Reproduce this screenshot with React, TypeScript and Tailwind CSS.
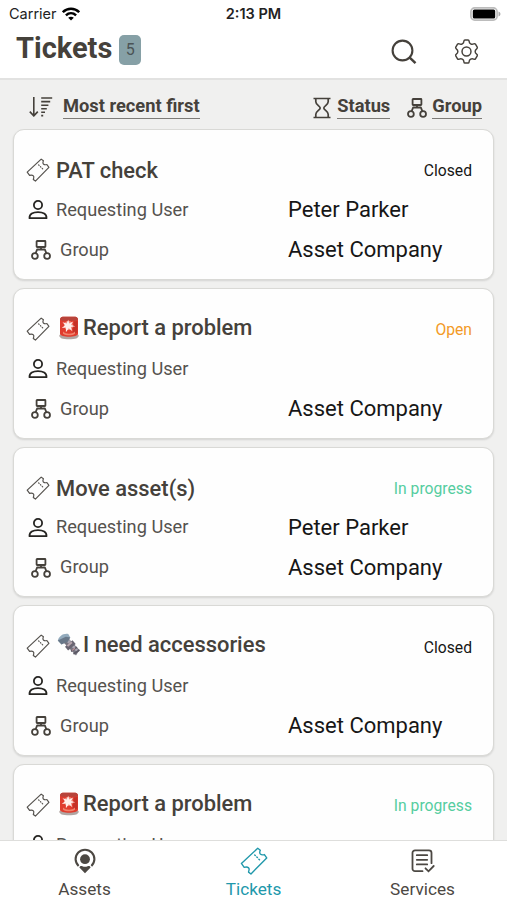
import React from 'react';

interface IconProps {
  className?: string;
}

const TicketIcon: React.FC<IconProps> = ({ className = '' }) => (
  <svg className={className} viewBox="0 0 24 24" fill="none" stroke="currentColor" strokeWidth="1.2" strokeLinejoin="round" strokeLinecap="round">
    <path d="M15.2 1.1 1.2 14.1 3.6 17.4C5 17 6.2 16.8 7.4 17.9 8.5 19 7.4 20.4 7.3 21.5L9.4 23.1 22.9 9.4 20.9 6.5C19.6 6.9 18.5 7 17.4 6 16.4 4.9 17 3.8 17.4 2.8Z" />
    <path d="M12.6 6.8l.5.5M14.4 8.6l.5.5M16.2 10.4l.5.5" />
  </svg>
);

const UserIcon: React.FC<IconProps> = ({ className = '' }) => (
  <svg className={className} viewBox="0 0 20 20" fill="none" stroke="currentColor" strokeWidth="1.8" strokeLinejoin="round">
    <circle cx="10" cy="5" r="4.1" />
    <path d="M1.5 18.1C1.3 14.1 5 12.1 10 12.1s8.700 2 8.500 6Z" />
  </svg>
);

const GroupIcon: React.FC<IconProps> = ({ className = '' }) => (
  <svg className={className} viewBox="0 0 20 20" fill="none" stroke="currentColor" strokeWidth="1.800" strokeLinejoin="round">
    <rect x="5.600" y="1" width="8.800" height="6" rx="0.500" />
    <path d="M10 7v2.500M4.600 13.300l1.500-3.800h7.800l1.500 3.800" />
    <circle cx="3.900" cy="16" r="2.900" />
    <circle cx="16.100" cy="16" r="2.900" />
  </svg>
);

const HourglassIcon: React.FC<IconProps> = ({ className = '' }) => (
  <svg className={className} viewBox="0 0 18 22" fill="none" stroke="currentColor" strokeWidth="1.700">
    <path d="M.5 1.500h17M.5 20.500h17M2.800 1.500v3.200c0 3 4.400 4.400 4.400 6.300s-4.400 3.300-4.400 6.300v3.200M15.200 1.500v3.200c0 3-4.400 4.400-4.400 6.300s4.400 3.300 4.400 6.300v3.200" />
  </svg>
);

const SortIcon: React.FC<IconProps> = ({ className = '' }) => (
  <svg className={className} viewBox="0 0 24 20" fill="none" stroke="currentColor" strokeWidth="1.600">
    <path d="M4.800 0v18.500M.8 14.600l4 4.300 4-4.300" />
    <path d="M12.200 1h11M12.200 4.600h9M12.200 8.200h7.200M12.200 11.800h5.600M12.200 15.200h3.800M12.200 18.600h2" />
  </svg>
);

const SearchIcon: React.FC<IconProps> = ({ className = '' }) => (
  <svg className={className} viewBox="0 0 26 26" fill="none" stroke="currentColor" strokeWidth="2.100">
    <circle cx="11.500" cy="11.500" r="9.900" />
    <path d="M18.200 18.200l6.300 6" strokeWidth="2.500" />
  </svg>
);

const GearIcon: React.FC<IconProps> = ({ className = '' }) => (
  <svg className={className} viewBox="0 0 24 24" fill="none" stroke="currentColor" strokeWidth="1.400" strokeLinejoin="round">
    <path d="M10.500.9h3c.7 0 .9.500 1 1.200.1 1.400.6 2 1.500 2.500s1.700.6 2.900.1c.7-.3 1.300-.3 1.700.3l1.700 2.900c.4.700.1 1.100-.5 1.500-1.100.8-1.500 1.600-1.500 2.600s.4 1.800 1.500 2.600c.6.400.9.800.5 1.500l-1.700 2.900c-.4.600-1 .6-1.700.3-1.200-.5-2-.4-2.900.1s-1.400 1.100-1.500 2.500c-.1.700-.3 1.200-1 1.200h-3c-.7 0-.9-.5-1-1.200-.1-1.400-.6-2-1.500-2.500s-1.700-.6-2.900-.1c-.7.300-1.300.3-1.700-.3l-1.700-2.900c-.4-.7-.1-1.100.5-1.500 1.100-.8 1.500-1.600 1.500-2.600s-.4-1.800-1.500-2.600c-.6-.4-.9-.8-.5-1.500L3.400 5c.4-.6 1-.6 1.700-.3 1.200.5 2 .4 2.900-.1s1.400-1.100 1.500-2.500c.1-.7.300-1.200 1-1.200Z" />
    <circle cx="12" cy="12" r="4.300" />
  </svg>
);

const WifiIcon: React.FC<IconProps> = ({ className = '' }) => (
  <svg className={className} viewBox="0 0 18 14" fill="none" stroke="currentColor" strokeWidth="2.500">
    <path d="M.8 5.200C5.500.6 12.500.6 17.200 5.200M3.900 8.300c3-2.800 7.200-2.800 10.200 0" />
    <path d="M9 13.600 6.200 10.800c1.600-1.400 4-1.400 5.600 0Z" fill="currentColor" stroke="none" />
  </svg>
);

const BatteryIcon: React.FC<IconProps> = ({ className = '' }) => (
  <svg className={className} viewBox="0 0 31 14">
    <rect x=".9" y=".9" width="26.200" height="12.200" rx="3.800" fill="#fff" stroke="#bcbcbc" strokeWidth="1.700" />
    <rect x="2.800" y="2.500" width="22.400" height="9" rx="1.600" fill="#000" />
    <path d="M28.500 4.500c2.600 1 2.600 4 0 5Z" fill="#aaa" />
  </svg>
);

const PinIcon: React.FC<IconProps> = ({ className = '' }) => (
  <svg className={className} viewBox="0 0 22 26" fill="currentColor">
    <path d="M4.600 18A9.400 9.400 0 1 1 17.400 18" fill="none" stroke="currentColor" strokeWidth="2.100" />
    <circle cx="11" cy="11.200" r="4.900" />
    <path d="M5.400 19.400c.6-1.800 2-1.700 3-1.200 1.700.7 3.500.7 5.200 0 1-.5 2.400-.6 3 1.200L11 25.300Z" />
  </svg>
);

const ServicesIcon: React.FC<IconProps> = ({ className = '' }) => (
  <svg className={className} viewBox="0 0 24 24" fill="none" stroke="currentColor" strokeWidth="1.800" strokeLinecap="round">
    <path d="M11.500 22.200H4a2.500 2.500 0 0 1-2.500-2.500V3.800A2.500 2.500 0 0 1 4 1.300h14a2.500 2.500 0 0 1 2.500 2.500v10.400" />
    <path d="M5.800 6.200h10.400M5.800 10.800h10.400M5.800 15.400h10.400M14.500 19.300l3 3 5.200-5.300" />
  </svg>
);

const SirenEmoji = () => (
  <svg className="h-6 w-5" viewBox="0 0 20 24">
    <path d="M1.500 18.500h17c1.200 0 1.500 1 1 2l-1.500 1.800c-4.500 1.300-11.500 1.300-16 0L.5 20.500c-.5-1-.2-2 1-2Z" fill="#b1a5a2" />
    <path d="M1 3.500C1 1.200 3 .7 5 .7h10c2 0 4 .5 4 2.800v14.200c0 4-18 4-18 0Z" fill="#e03c2e" />
    <path d="M1 3.500C1 1.200 3 .7 5 .7h10c2 0 4 .5 4 2.800l-2 1.200H3Z" fill="#b8433a" />
    <path d="M15 5.500l3.500-.5v11.500l-5 1.500Z" fill="#c53127" />
    <path d="M4 15.500c3 3 9 3 12 0v2.300c-3 2-9 2-12 0Z" fill="#f1826c" />
    <circle cx="9.500" cy="9.500" r="4.500" fill="#f28b7c" />
    <path d="M9.200 3.800l1 3.800 4-2.200-2.200 3.600 4.300 1.200-4.500.8 1.600 4.300-3.600-3-2.900 3.900v-4.600l-4.200.3 3.500-2.600L3.500 6.200l4.200 1.400Z" fill="#ffefeb" />
  </svg>
);

const BoltEmoji = () => (
  <svg className="h-6 w-6" viewBox="0 0 24 24">
    <path d="M7 10l4-5 11.500 12-3.500 5.500Z" fill="#777580" />
    <path d="M9.500 8.500l2.500-2 9.500 11-1.200 2Z" fill="#aaa6b3" />
    <path d="M.8 7.500C2 3.300 6 .2 11.300 1l2 3.500L4.500 11.500Z" fill="#93abbd" />
    <path d="M.8 7.500l8-3.700 4.500.7-2.500 4.200-6.300 2.800Z" fill="#697889" />
    <path d="M8 13.800l7.500-6.500 3.200 3.600-7.600 6.600Z" fill="#686471" />
    <path d="M9.800 12.300l4.500-3.800 1.200 1.500-4.400 3.700Z" fill="#b9a7af" />
    <path d="M14 18.300l6-4.200M16.500 21l6-4" stroke="#5a5864" strokeWidth="1.600" />
    <path d="M15 17.500l3-2.200" stroke="#b58d94" strokeWidth="1.300" />
  </svg>
);

type TicketStatus = 'Closed' | 'Open' | 'In progress';

interface Ticket {
  id: number;
  title: string;
  status: TicketStatus;
  emoji?: React.ReactNode;
  user?: string;
  group?: string;
}

const tickets: Ticket[] = [
  { id: 1, title: 'PAT check', status: 'Closed', user: 'Peter Parker', group: 'Asset Company' },
  { id: 2, title: 'Report a problem', status: 'Open', emoji: <SirenEmoji />, group: 'Asset Company' },
  { id: 3, title: 'Move asset(s)', status: 'In progress', user: 'Peter Parker', group: 'Asset Company' },
  { id: 4, title: 'I need accessories', status: 'Closed', emoji: <BoltEmoji />, group: 'Asset Company' },
  { id: 5, title: 'Report a problem', status: 'In progress', emoji: <SirenEmoji />, group: 'Asset Company' },
];

const statusClasses = {
  Closed: 'text-[#161616]',
  Open: 'text-[#f39a26]',
  'In progress': 'text-[#55cda0]',
};

const TicketCard: React.FC<{ ticket: Ticket }> = ({ ticket }) => (
  <article className="h-[150.8px] shrink-0 rounded-[11px] border border-[#d9d9d6] bg-[#fefefe] pt-5 pr-[21px] pl-[12px] shadow-[0_1px_2px_rgba(0,0,0,0.12)]">
    <div className="flex h-10 items-center">
      <TicketIcon className="size-6 text-[#55524e]" />
      <h2 className={`ml-[6px] flex items-center text-[21.9px] leading-none font-medium text-[#45413b] ${ticket.emoji ? 'pb-[2px]' : 'pt-[2px]'}`}>
        {ticket.emoji && <span className="mr-[2px] flex w-[25px] justify-center">{ticket.emoji}</span>}
        {ticket.title}
      </h2>
      <span className={`ml-auto pt-[2px] text-[15.7px] ${statusClasses[ticket.status]}`}>{ticket.status}</span>
    </div>
    <div className="flex h-10 items-center text-[#55524e]">
      <UserIcon className="ml-[2px] size-5 text-[#262522]" />
      <span className="ml-2 w-[232px] pb-px text-[18.2px]">Requesting User</span>
      <span className="text-[22px] leading-7 text-[#161616]">{ticket.user}</span>
    </div>
    <div className="flex h-10 items-center text-[#55524e]">
      <GroupIcon className="ml-[5px] size-5 text-[#45413b]" />
      <span className="ml-[9px] w-[228px] pb-px text-[18.2px]">Group</span>
      <span className="text-[22px] leading-7 text-[#161616]">{ticket.group}</span>
    </div>
  </article>
);

const StatusBar = () => (
  <div className="grid h-7 grid-cols-3 items-center pr-[6px] pl-[9px] font-['Inter',sans-serif] text-[14.5px] text-[#222]">
    <div className="flex items-center gap-[5px]">
      <span>Carrier</span>
      <WifiIcon className="h-[14px] w-[18px] text-black" />
    </div>
    <span className="pr-[3px] text-center font-semibold">2:13 PM</span>
    <BatteryIcon className="h-[14px] w-[31px] justify-self-end" />
  </div>
);

interface TabProps {
  label: string;
  icon: React.ReactNode;
  active?: boolean;
}

const Tab: React.FC<TabProps> = ({ label, icon, active = false }) => (
  <button className={`flex flex-col items-center pt-[3px] text-[17.2px] leading-6 ${active ? 'text-[#2198ab]' : 'text-[#4c4843]'}`}>
    <span className="flex h-[33px] items-center">{icon}</span>
    {label}
  </button>
);

export default function App() {
  return (
    <div className="flex h-[900px] w-[507px] flex-col overflow-hidden bg-[#f0f0ef] font-['Roboto',sans-serif] text-[#45413b]">
      <header className="h-20 shrink-0 border-b-2 border-[#e2e2e1] bg-white">
        <StatusBar />
        <div className="flex items-start pr-[28px] pl-4">
          <h1 className="mt-[2px] text-[29px] leading-9 font-bold">Tickets</h1>
          <span className="mt-[7px] ml-[7px] flex h-[30px] w-[22px] items-center justify-center rounded-[5px] bg-[#86a0a6] text-base text-[#4b5355]">5</span>
          <SearchIcon className="mt-[11px] ml-auto size-[26px]" />
          <GearIcon className="mt-[11px] ml-[37px] size-[25px]" />
        </div>
      </header>

      <div className="flex h-[49px] shrink-0 items-start pt-[13px] pr-[25px] pl-[29px] text-[18.3px] leading-[25px] font-bold">
        <SortIcon className="mt-1 h-5 w-6" />
        <span className="ml-[10px] border-b-[1.5px] border-[#7d7b77]">Most recent first</span>
        <HourglassIcon className="mt-1 ml-auto h-[22px] w-[18px]" />
        <span className="ml-[6px] border-b-[1.5px] border-[#7d7b77]">Status</span>
        <GroupIcon className="mt-[5px] ml-[17px] size-5" />
        <span className="ml-[5px] border-b-[1.5px] border-[#7d7b77]">Group</span>
      </div>

      <main className="flex min-h-0 flex-1 flex-col gap-2 overflow-hidden px-[13px]">
        {tickets.map((ticket) => (
          <TicketCard key={ticket.id} ticket={ticket} />
        ))}
      </main>

      <nav className="grid h-[60px] shrink-0 grid-cols-3 border-t border-[#dededc] bg-white">
        <Tab label="Assets" icon={<PinIcon className="h-[26px] w-[22px]" />} />
        <Tab label="Tickets" icon={<TicketIcon className="size-7" />} active />
        <Tab label="Services" icon={<ServicesIcon className="size-6" />} />
      </nav>
    </div>
  );
}
